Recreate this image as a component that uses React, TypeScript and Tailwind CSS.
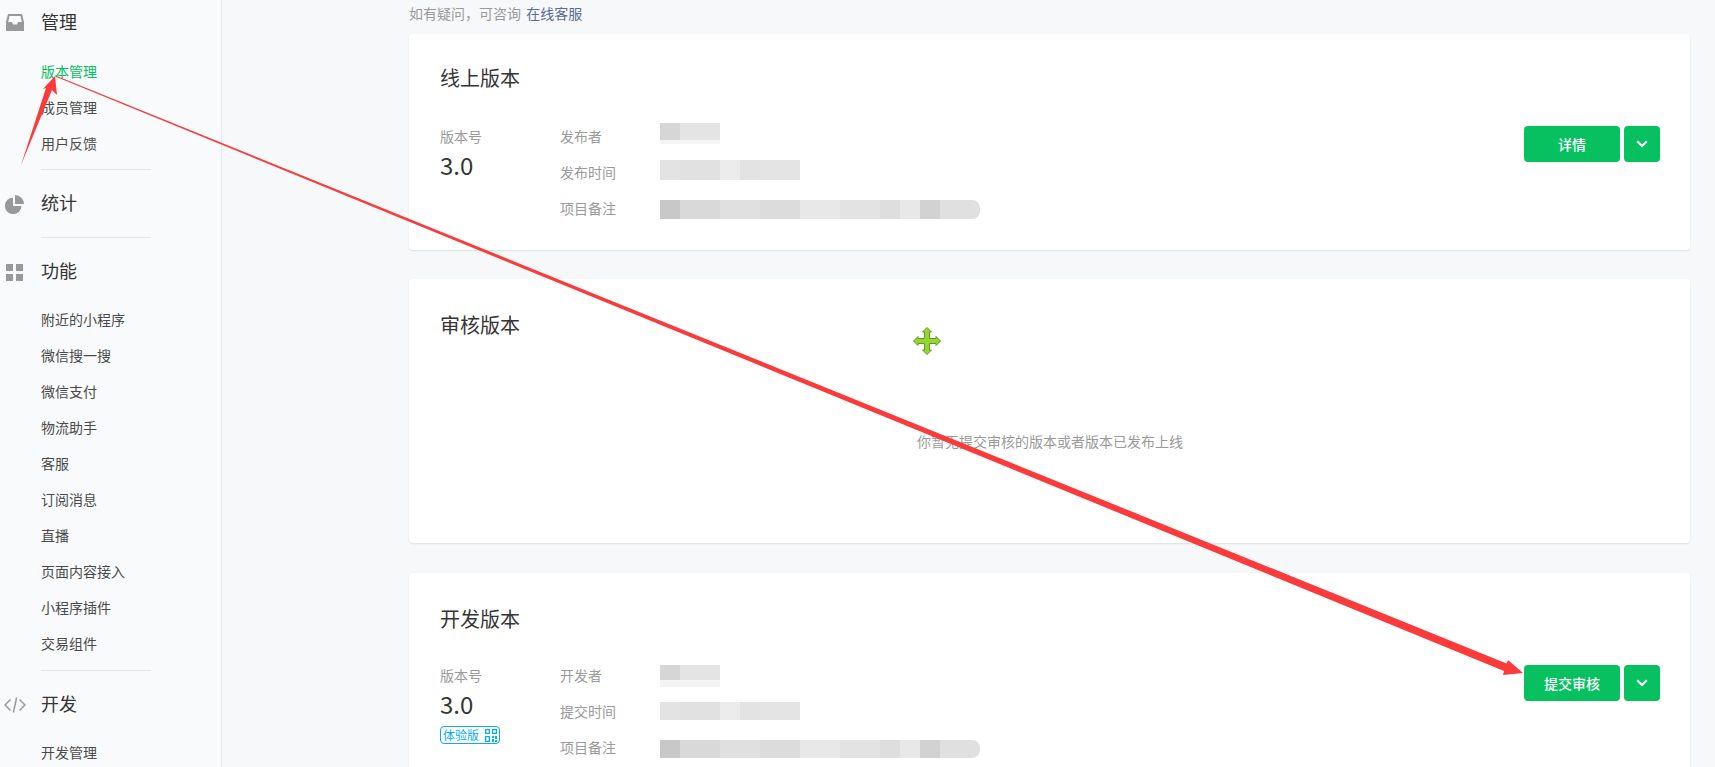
import React from "react";

const font = "font-['Microsoft_YaHei','Noto_Sans_CJK_SC','Noto_Sans',sans-serif]";

function InboxIcon() {
  return (
    <svg width="18" height="17" viewBox="0 0 18 17">
      <path fillRule="evenodd" fill="#999999" d="M2 0H16L18 8V17H0V8ZM3.5 2L2.2 8H6L7 10.5H11L12 8H15.8L14.5 2Z" />
    </svg>
  );
}
function PieIcon() {
  return (
    <svg width="19" height="19" viewBox="0 0 19 19">
      <path fill="#999999" d="M8 2.5V11H16.5A8.3 8.3 0 1 1 8 2.5Z" />
      <path fill="#999999" d="M10 0A9 9 0 0 1 19 9H10Z" />
    </svg>
  );
}
function GridIcon() {
  return (
    <svg width="17" height="17" viewBox="0 0 17 17" fill="#999999">
      <rect x="0" y="0" width="7" height="7" />
      <rect x="10" y="0" width="7" height="7" />
      <rect x="0" y="10" width="7" height="7" />
      <rect x="10" y="10" width="7" height="7" />
    </svg>
  );
}
function CodeIcon() {
  return (
    <svg width="22" height="16" viewBox="0 0 22 16" fill="none" stroke="#999999" strokeWidth="1.5">
      <polyline points="6.5,2.5 1,8 6.5,13.5" />
      <polyline points="15.5,2.5 21,8 15.5,13.5" />
      <line x1="12.6" y1="0.5" x2="9.4" y2="15.5" />
    </svg>
  );
}
function QrIcon() {
  return (
    <svg width="12" height="13" viewBox="0 0 12 13" fill="#06aefa">
      <path fillRule="evenodd" d="M0 0H5V5H0ZM1.3 1.3V3.7H3.7V1.3Z" />
      <path fillRule="evenodd" d="M7 0H12V5H7ZM8.3 1.3V3.7H10.7V1.3Z" />
      <path fillRule="evenodd" d="M0 7H5V13H0ZM1.3 8.3V11.7H3.7V8.3Z" />
      <rect x="7" y="7" width="2" height="2" />
      <rect x="10" y="7" width="2" height="3" />
      <rect x="7" y="10" width="2" height="3" />
      <rect x="10" y="11" width="2" height="2" />
    </svg>
  );
}
function Chevron() {
  return (
    <svg width="12" height="8" viewBox="0 0 12 8" fill="none" stroke="#ffffff" strokeWidth="2">
      <polyline points="1.2,1.2 6,6 10.8,1.2" />
    </svg>
  );
}

function NavItem({ label, active }: { label: string; active?: boolean }) {
  return (
    <div className={`h-9 leading-[33px] pl-[41px] text-sm ${active ? "text-[#07c160]" : "text-[#4a4a4a]"}`}>{label}</div>
  );
}
function NavHead({ icon, label, textShift }: { icon: React.ReactNode; label: string; textShift: string }) {
  return (
    <div className="h-11 flex items-center text-[18px] text-[#353535]">
      <div className="w-[29px] flex justify-center">{icon}</div>
      <span className={`ml-3 ${textShift}`}>{label}</span>
    </div>
  );
}
function Divider() {
  return <div className="ml-[41px] w-[110px] h-px bg-[#e7e7eb]" />;
}

function Sidebar() {
  return (
    <aside className="w-[222px] shrink-0 h-full bg-[#f9fafc] border-r border-[#e7e7eb]">
      <NavHead icon={<InboxIcon />} label="管理" textShift="-mt-[1px]" />
      <div className="mt-[11px] pb-[6px]">
        <NavItem label="版本管理" active />
        <NavItem label="成员管理" />
        <NavItem label="用户反馈" />
      </div>
      <Divider />
      <div className="pt-3 pb-[11px]">
        <NavHead icon={<PieIcon />} label="统计" textShift="-mt-[3px]" />
      </div>
      <Divider />
      <div className="pt-3">
        <NavHead icon={<GridIcon />} label="功能" textShift="-mt-[3px]" />
      </div>
      <div className="mt-[9px] pb-[7px]">
        {["附近的小程序", "微信搜一搜", "微信支付", "物流助手", "客服", "订阅消息", "直播", "页面内容接入", "小程序插件", "交易组件"].map((t) => (
          <NavItem key={t} label={t} />
        ))}
      </div>
      <Divider />
      <div className="pt-3">
        <NavHead icon={<CodeIcon />} label="开发" textShift="-mt-[3px]" />
      </div>
      <div className="mt-[9px]">
        <NavItem label="开发管理" />
      </div>
    </aside>
  );
}

const shortBlur = ["w-5 bg-[#d6d6d6]", "w-10 bg-[#e4e4e4]"];
const timeBlur = ["w-5 bg-[#e3e3e3]", "w-10 bg-[#e1e1e1]", "w-5 bg-[#ececec]", "w-5 bg-[#e3e3e3]", "w-10 bg-[#e4e4e4]"];
const noteBlur = [
  "w-5 bg-[#c8c8c8]",
  "w-10 bg-[#d9d9d9]",
  "w-10 bg-[#e0e0e0]",
  "w-10 bg-[#dcdcdc]",
  "w-10 bg-[#e8e8e8]",
  "w-10 bg-[#e3e3e3]",
  "w-5 bg-[#dedede]",
  "w-5 bg-[#e8e8e8]",
  "w-5 bg-[#d2d2d2]",
  "w-10 bg-[#e0e0e0] rounded-r-lg",
];

function Row({ label, blocks, box, strip }: { label: string; blocks: string[]; box: string; strip?: string }) {
  return (
    <div className="flex h-9">
      <div className="w-[100px] shrink-0 leading-[35px] text-sm text-[#9a9a9a]">{label}</div>
      <div>
        <div className={`flex ${box}`}>
          {blocks.map((c, i) => (
            <div key={i} className={`h-full ${c}`} />
          ))}
        </div>
        {strip && <div className={`w-[60px] bg-[#f4f4f4] ${strip}`} />}
      </div>
    </div>
  );
}

function Actions({ label }: { label: string }) {
  return (
    <div className="flex gap-1 mt-[7px]">
      <button className="w-24 h-9 rounded bg-[#07c160] text-white text-sm font-medium">{label}</button>
      <button className="w-9 h-9 rounded bg-[#07c160] flex items-center justify-center">
        <Chevron />
      </button>
    </div>
  );
}

function VersionCard({
  title,
  titleLeading,
  labels,
  action,
  boxes,
  strip,
  badge,
}: {
  title: string;
  titleLeading: string;
  labels: string[];
  action: string;
  boxes: string[];
  strip: string;
  badge?: boolean;
}) {
  return (
    <section className="bg-white rounded shadow-[0_1px_2px_rgba(0,0,0,0.1)] pl-[31px] pt-[30px] pr-[30px] h-[216px]">
      <h2 className={`h-7 text-xl font-normal text-[#353535] ${titleLeading}`}>{title}</h2>
      <div className="mt-[27px] flex justify-between items-start">
        <div className="flex">
          <div className="w-[120px] shrink-0">
            <div className="h-9 leading-[35px] text-sm text-[#9a9a9a]">版本号</div>
            <div className="h-6 leading-5 text-2xl text-[#353535]">3.0</div>
            {badge && (
              <div className="mt-2 w-[60px] h-[18px] rounded-sm border border-[#06aefa] flex items-center justify-between pl-[2px] pr-[2px] text-xs leading-none text-[#06aefa]">
                <span>体验版</span>
                <QrIcon />
              </div>
            )}
          </div>
          <div>
            <Row label={labels[0]} blocks={shortBlur} box={boxes[0]} strip={strip} />
            <Row label={labels[1]} blocks={timeBlur} box={boxes[1]} />
            <Row label={labels[2]} blocks={noteBlur} box={boxes[2]} />
          </div>
        </div>
        <Actions label={action} />
      </div>
    </section>
  );
}

function Overlay() {
  const cross =
    "0,-13.5 4.5,-9 2.5,-9 2.5,-2.5 9,-2.5 9,-4.5 13.5,0 9,4.5 9,2.5 2.5,2.5 2.5,9 4.5,9 0,13.5 -4.5,9 -2.5,9 -2.5,2.5 -9,2.5 -9,4.5 -13.5,0 -9,-4.5 -9,-2.5 -2.5,-2.5 -2.5,-9 -4.5,-9";
  return (
    <svg className="absolute inset-0 pointer-events-none" width="1715" height="767" viewBox="0 0 1715 767">
      <polygon fill="#fb3b3b" points="21,165 46,88 43,89 55,76 57,95 52,90" />
      <polygon fill="#fb3b3b" points="55.6,75.6 1506.5,663.4 1508,660 1523,673 1503,675 1504,671 55.2,76.4" />
      <g transform="translate(927 341)">
        <polygon points={cross} fill="#93d437" stroke="#639c14" strokeWidth="1" />
      </g>
    </svg>
  );
}

export default function App() {
  return (
    <div className={`relative flex w-[1715px] h-[767px] overflow-hidden bg-[#f7f8fa] ${font}`}>
      <Sidebar />
      <main className="flex-1 pl-[187px] pr-[25px]">
        <p className="h-[26px] leading-[26px] text-sm text-[#9a9a9a]">
          如有疑问，可咨询 <span className="ml-0.5 text-[#576b95]">在线客服</span>
        </p>
        <div className="mt-2">
          <VersionCard
            title="线上版本"
            titleLeading="leading-7"
            labels={["发布者", "发布时间", "项目备注"]}
            action="详情"
            boxes={["mt-1 h-[17px]", "mt-[5px] h-5", "mt-[9px] h-[19px]"]}
            strip="h-1"
          />
        </div>
        <section className="mt-[29px] h-[264px] bg-white rounded shadow-[0_1px_2px_rgba(0,0,0,0.1)] pl-[31px] pr-[30px] pt-[32px]">
          <h2 className="h-7 leading-7 text-xl font-normal text-[#353535]">审核版本</h2>
          <p className="mt-[92px] h-5 leading-5 text-center text-sm text-[#9a9a9a]">你暂无提交审核的版本或者版本已发布上线</p>
        </section>
        <div className="mt-[30px]">
          <VersionCard
            title="开发版本"
            titleLeading="leading-8"
            labels={["开发者", "提交时间", "项目备注"]}
            action="提交审核"
            boxes={["mt-[7px] h-[15px]", "mt-2 h-[18px]", "mt-[10px] h-[18px]"]}
            strip="h-[7px]"
            badge
          />
        </div>
      </main>
      <Overlay />
    </div>
  );
}
